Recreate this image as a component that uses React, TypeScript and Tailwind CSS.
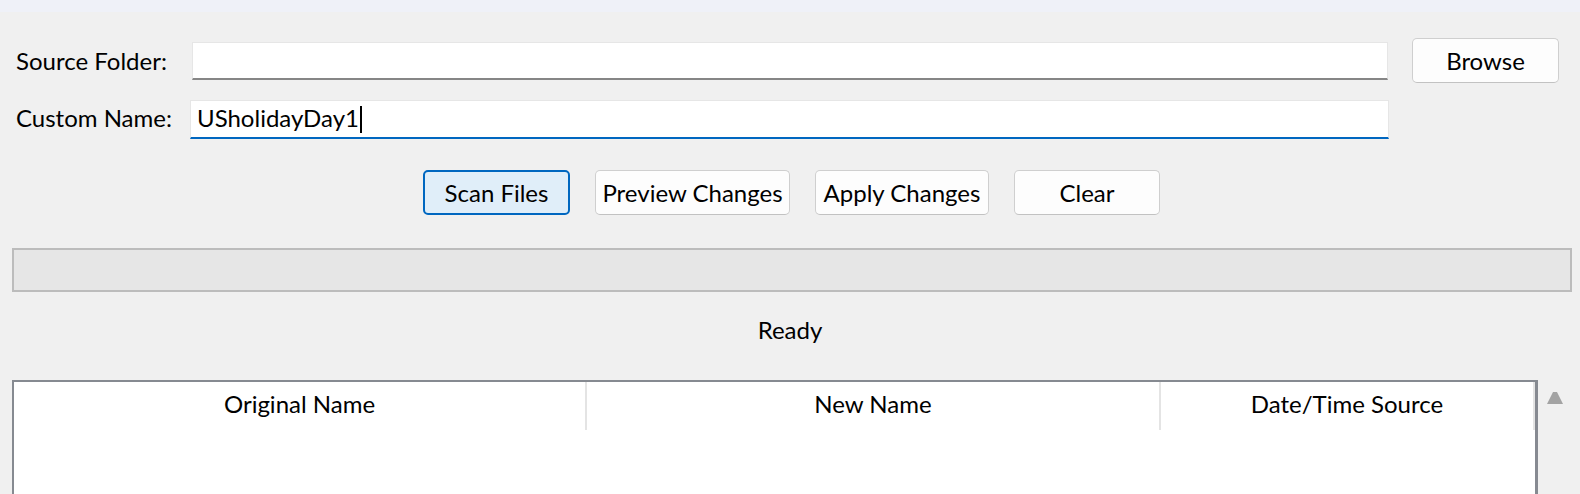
import React from "react";

const font = { fontFamily: "Lato, 'Noto Sans', sans-serif" };

const Button: React.FC<{ label: string; width: string; active?: boolean }> = ({
  label,
  width,
  active,
}) => (
  <button
    type="button"
    className={
      active
        ? `${width} h-[45px] rounded-[5px] border-2 border-[#0067c0] bg-[#e0eef9] text-[24px] text-black`
        : `${width} h-[45px] rounded-[5px] border border-[#cfcfcf] border-b-[#c2c2c2] bg-[#fdfdfd] text-[24px] text-black`
    }
  >
    {label}
  </button>
);

const App: React.FC = () => {
  return (
    <div
      className="w-[1580px] h-[494px] overflow-hidden bg-[#f0f0f0] text-black"
      style={font}
    >
      {/* title strip */}
      <div className="h-[12px] bg-[#eff1f8]" />

      {/* Source folder */}
      <div className="mt-[26px] flex h-[45px] items-center pl-[16px]">
        <span className="w-[176px] text-[24px] leading-none">Source Folder:</span>
        <div className="h-[38px] w-[1196px] border border-[#e6e6e6] border-b-2 border-b-[#868686] bg-white" />
        <button
          type="button"
          className="ml-[24px] h-[45px] w-[147px] rounded-[5px] border border-[#cfcfcf] border-b-[#c2c2c2] bg-[#fdfdfd] text-[24px]"
        >
          Browse
        </button>
      </div>

      {/* Custom name */}
      <div className="mt-[17px] flex h-[39px] items-center pl-[16px]">
        <span className="w-[174px] pb-[4px] text-[24px] leading-none">Custom Name:</span>
        <div className="flex h-[39px] w-[1199px] items-center border border-[#e6e6e6] border-b-2 border-b-[#0067c0] bg-white pl-[6px]">
          <span className="pb-[3px] text-[24px] leading-none">USholidayDay1</span>
          <span className="ml-[1px] h-[27px] w-[2px] bg-black" />
        </div>
      </div>

      {/* actions */}
      <div className="mt-[31px] flex justify-center gap-[25px] pl-[3px]">
        <Button label="Scan Files" width="w-[147px]" active />
        <Button label="Preview Changes" width="w-[195px]" />
        <Button label="Apply Changes" width="w-[174px]" />
        <Button label="Clear" width="w-[146px]" />
      </div>

      {/* progress */}
      <div className="mt-[33px] ml-[12px] mr-[8px] h-[44px] border-2 border-[#bcbcbc] bg-[#e6e6e6]" />

      <div className="mt-[22px] h-[32px] text-center text-[24px] leading-[32px]">
        Ready
      </div>

      {/* file table */}
      <div className="mt-[34px] flex">
        <div className="ml-[12px] h-[120px] w-[1526px] border-l-2 border-t-2 border-r-[3px] border-[#868a91] bg-white">
          <div className="grid h-[48px] grid-cols-[573px_574px_1fr] text-[24px]">
            <div className="flex items-center justify-center border-r-2 border-[#e4e4e4] pb-[4px]">
              Original Name
            </div>
            <div className="flex items-center justify-center border-r-2 border-[#e4e4e4] pb-[4px]">
              New Name
            </div>
            <div className="flex items-center justify-center border-r-2 border-[#e4e4e4] pb-[4px]">
              Date/Time Source
            </div>
          </div>
        </div>
        <div className="flex w-[34px] justify-center pt-[12px]">
          <svg width="16" height="12" viewBox="0 0 16 12">
            <path d="M6 0 H10 L16 12 H0 Z" fill="#a3a3a3" />
          </svg>
        </div>
      </div>
    </div>
  );
};

export default App;
